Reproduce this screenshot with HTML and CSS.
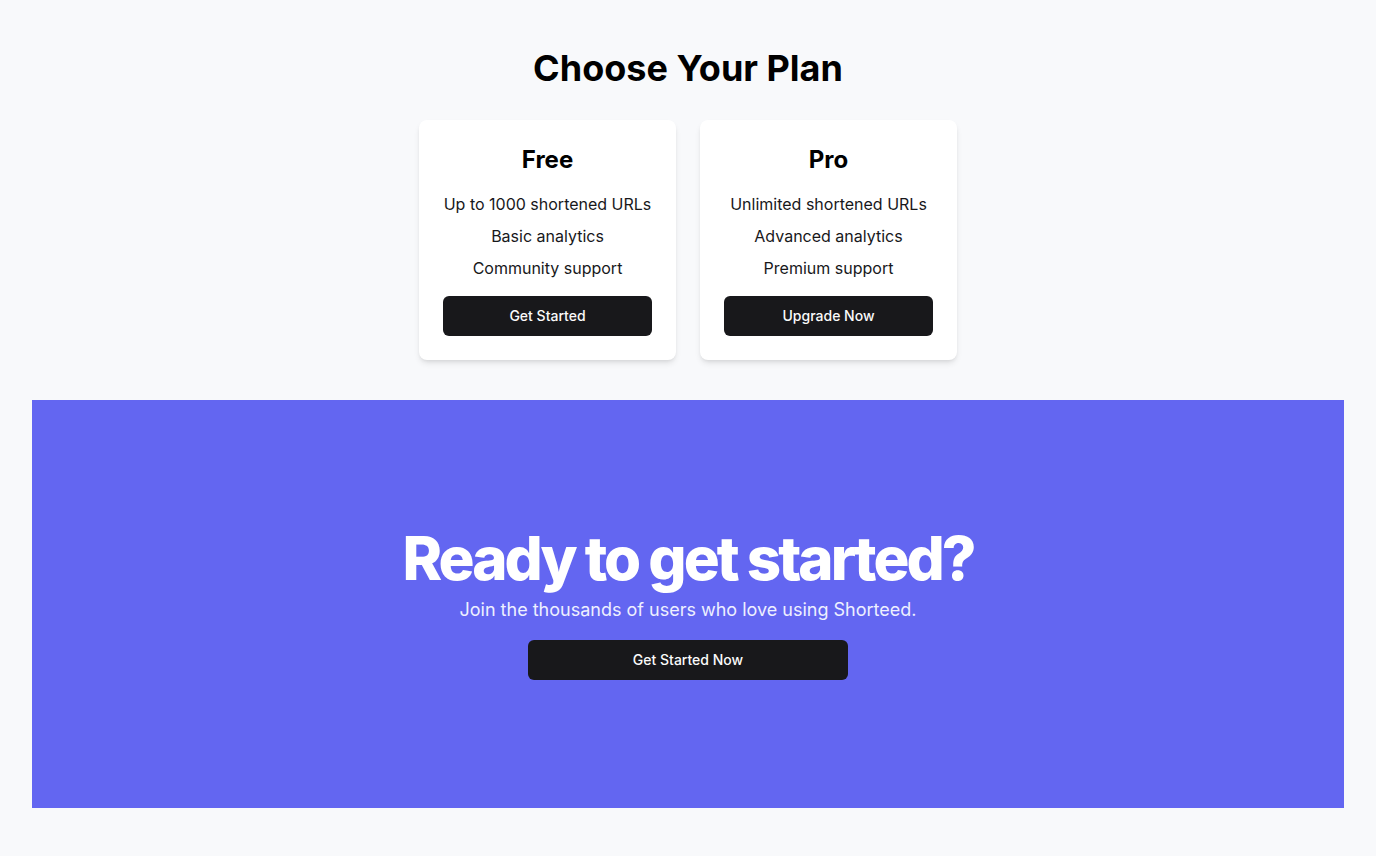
FILE: index.html
```html
<!DOCTYPE html>
<html lang="en">
<head>
<meta charset="utf-8">
<title>Shorteed Pricing</title>
<link rel="stylesheet" href="styles.css">
</head>
<body>
<main class="page">
  <section class="pricing">
    <h2 class="pricing-title">Choose Your Plan</h2>
    <div class="plans">
      <div class="plan">
        <h3 class="plan-name">Free</h3>
        <ul class="features">
          <li>Up to 1000 shortened URLs</li>
          <li>Basic analytics</li>
          <li>Community support</li>
        </ul>
        <button class="btn">Get Started</button>
      </div>
      <div class="plan">
        <h3 class="plan-name">Pro</h3>
        <ul class="features">
          <li>Unlimited shortened URLs</li>
          <li>Advanced analytics</li>
          <li>Premium support</li>
        </ul>
        <button class="btn">Upgrade Now</button>
      </div>
    </div>
  </section>
  <section class="cta">
    <div class="cta-inner">
      <h2 class="cta-title">Ready to get started?</h2>
      <p class="cta-text">Join the thousands of users who love using Shorteed.</p>
      <button class="btn btn-wide">Get Started Now</button>
    </div>
  </section>
</main>
</body>
</html>
```

FILE: styles.css
```css
* { box-sizing: border-box; }
html, body { margin: 0; padding: 0; }
body {
  background: #f8f9fb;
  font-family: Inter, "Noto Sans", sans-serif;
  color: #09090b;
}
.page {
  padding: 0 32px 48px;
}
.pricing {
  padding: 48px 0 40px;
  display: flex;
  flex-direction: column;
  align-items: center;
}
.pricing-title {
  margin: 0 0 32px;
  font-size: 36px;
  line-height: 40px;
  font-weight: 700;
  color: #000;
}
.plans {
  display: flex;
  gap: 24px;
}
.plan {
  width: 257px;
  background: #fff;
  border-radius: 8px;
  box-shadow: 0 4px 6px -1px rgba(0,0,0,0.1), 0 2px 4px -2px rgba(0,0,0,0.1);
  padding: 24px;
  display: flex;
  flex-direction: column;
  align-items: center;
}
.plan-name {
  margin: 0;
  font-size: 24px;
  line-height: 32px;
  font-weight: 700;
  color: #000;
}
.features {
  list-style: none;
  margin: 16px 0 0;
  padding: 0;
  display: flex;
  flex-direction: column;
  gap: 8px;
  text-align: center;
  font-size: 16px;
  line-height: 24px;
  color: #18181b;
}
.btn {
  margin-top: 16px;
  width: 100%;
  height: 40px;
  padding: 0 0 1px;
  border: none;
  border-radius: 6px;
  background: #18181b;
  color: #fafafa;
  font-family: Inter, "Noto Sans", sans-serif;
  font-size: 14px;
  font-weight: 500;
  cursor: pointer;
}
.cta {
  background: #6366f1;
  height: 408px;
  display: flex;
  align-items: center;
  justify-content: center;
}
.cta-inner {
  display: flex;
  flex-direction: column;
  align-items: center;
}
.cta-title {
  margin: 0;
  font-size: 60px;
  line-height: 60px;
  font-weight: 800;
  letter-spacing: -0.05em;
  color: #fff;
}
.cta-text {
  margin: 8px 0 0;
  font-size: 18px;
  line-height: 28px;
  color: #eef0ff;
}
.btn-wide {
  width: 320px;
}
```
